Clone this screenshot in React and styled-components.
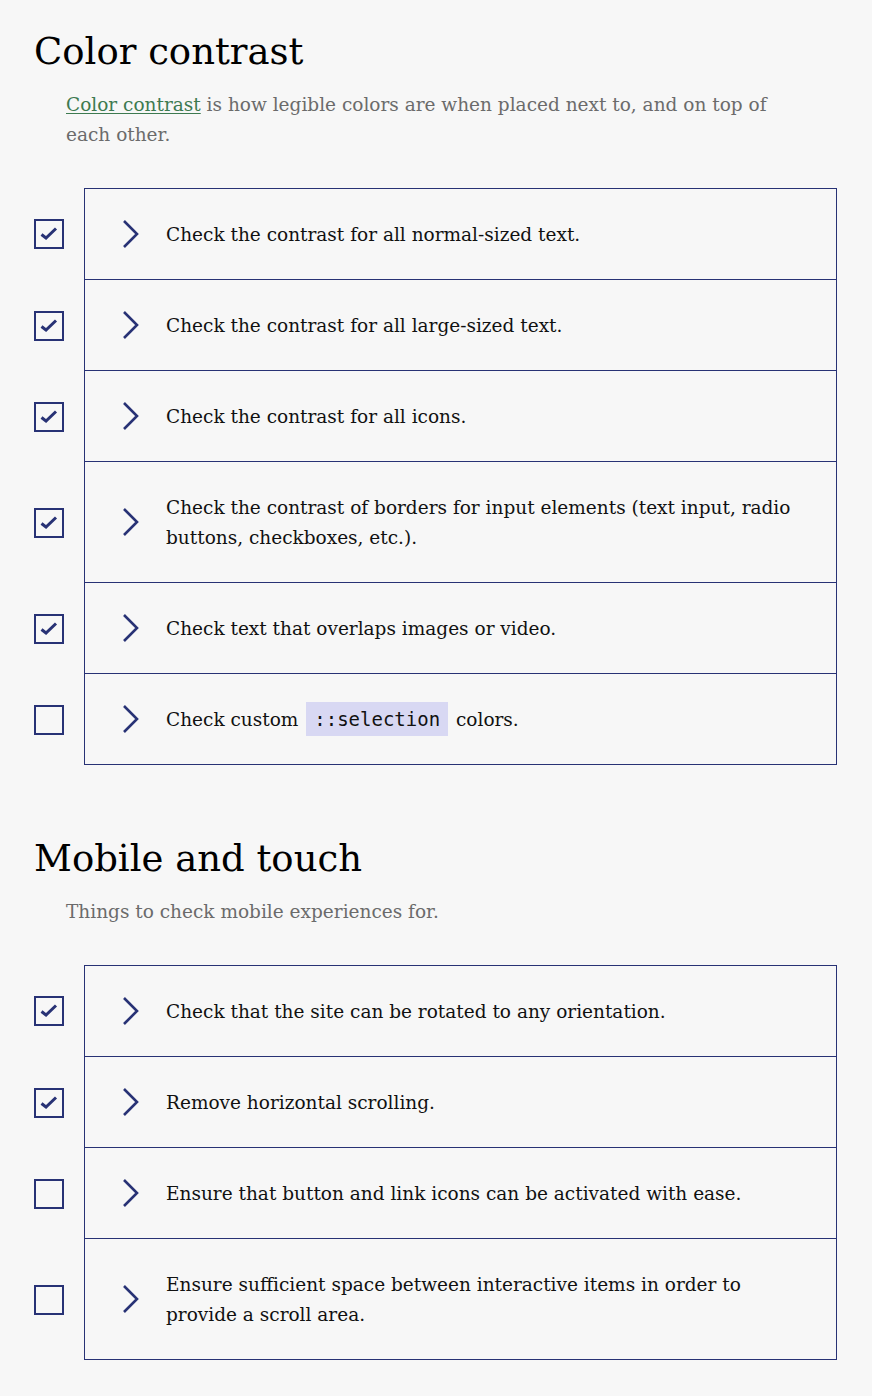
import React from 'react'
import styled, { createGlobalStyle } from 'styled-components'

const GlobalStyle = createGlobalStyle`
  html, body {
    margin: 0;
    padding: 0;
    background: #f7f7f7;
  }
  body {
    font-family: "DejaVu Serif", "Liberation Serif", serif;
    color: #111;
  }
`

const Page = styled.main`
  padding: 27px 35px 36px 34px;
`

const Section = styled.section`
  & + & {
    margin-top: 69px;
  }
`

const Heading = styled.h2`
  margin: 0;
  font-size: 37px;
  line-height: 50px;
  font-weight: 400;
  color: #000;
`

const Intro = styled.p`
  margin: 13px 0 38px 32px;
  font-size: 18.5px;
  line-height: 30px;
  color: #6b6b6b;
  max-width: 720px;
`

const IntroLink = styled.a`
  color: #3d7a50;
  text-decoration: underline;
  text-underline-offset: 2px;
`

const Code = styled.code`
  font-family: "DejaVu Sans Mono", "Liberation Mono", monospace;
  font-size: 19px;
  line-height: 1;
  background: #d8d8f3;
  padding: 6px 8px;
  margin: 0 2px;
`

const List = styled.ul`
  list-style: none;
  margin: 0;
  padding: 0;
`

const Row = styled.li`
  display: flex;
  align-items: center;
  gap: 20px;
`

const Box = styled.span`
  flex: none;
  width: 26px;
  height: 26px;
  border: 2px solid #283275;
  display: flex;
  align-items: center;
  justify-content: center;
`

const Item = styled.div`
  flex: 1;
  display: flex;
  align-items: center;
  border: 1px solid #283275;
  border-top-width: ${({ $first }) => ($first ? '1px' : '0')};
  padding: 31px 40px 29px 36px;
  min-height: 30px;
`

const ChevronWrap = styled.span`
  flex: none;
  display: flex;
  width: 45px;
  margin-top: -2px;
`

const ItemText = styled.span`
  font-size: 18.5px;
  line-height: 30px;
  color: #111;
`

const sections = [
  {
    title: 'Color contrast',
    intro: (
      <>
        <IntroLink href="#">Color contrast</IntroLink> is how legible colors are when placed next to, and on top of
        each other.
      </>
    ),
    items: [
      { done: true, text: 'Check the contrast for all normal-sized text.' },
      { done: true, text: 'Check the contrast for all large-sized text.' },
      { done: true, text: 'Check the contrast for all icons.' },
      { done: true, text: 'Check the contrast of borders for input elements (text input, radio buttons, checkboxes, etc.).' },
      { done: true, text: 'Check text that overlaps images or video.' },
      { done: false, text: <>Check custom <Code>::selection</Code> colors.</> },
    ],
  },
  {
    title: 'Mobile and touch',
    intro: 'Things to check mobile experiences for.',
    items: [
      { done: true, text: 'Check that the site can be rotated to any orientation.' },
      { done: true, text: 'Remove horizontal scrolling.' },
      { done: false, text: 'Ensure that button and link icons can be activated with ease.' },
      { done: false, text: 'Ensure sufficient space between interactive items in order to provide a scroll area.' },
    ],
  },
]

function Checkbox({ checked }) {
  return (
    <Box>
      {checked && (
        <svg width="18" height="14" viewBox="0 0 18 14">
          <path d="M1.5 7.5 L6 11 L16 1.5" fill="none" stroke="#283275" strokeWidth="3" />
        </svg>
      )}
    </Box>
  )
}

function Chevron() {
  return (
    <svg width="20" height="30" viewBox="0 0 20 30">
      <path d="M3 2 L16 15 L3 28" fill="none" stroke="#283275" strokeWidth="2.6" />
    </svg>
  )
}

export default function App() {
  return (
    <Page>
      <GlobalStyle />
      {sections.map((s) => (
        <Section key={s.title}>
          <Heading>{s.title}</Heading>
          <Intro>{s.intro}</Intro>
          <List>
            {s.items.map((item, i) => (
              <Row key={i}>
                <Checkbox checked={item.done} />
                <Item $first={i === 0}>
                  <ChevronWrap>
                    <Chevron />
                  </ChevronWrap>
                  <ItemText>{item.text}</ItemText>
                </Item>
              </Row>
            ))}
          </List>
        </Section>
      ))}
    </Page>
  )
}
